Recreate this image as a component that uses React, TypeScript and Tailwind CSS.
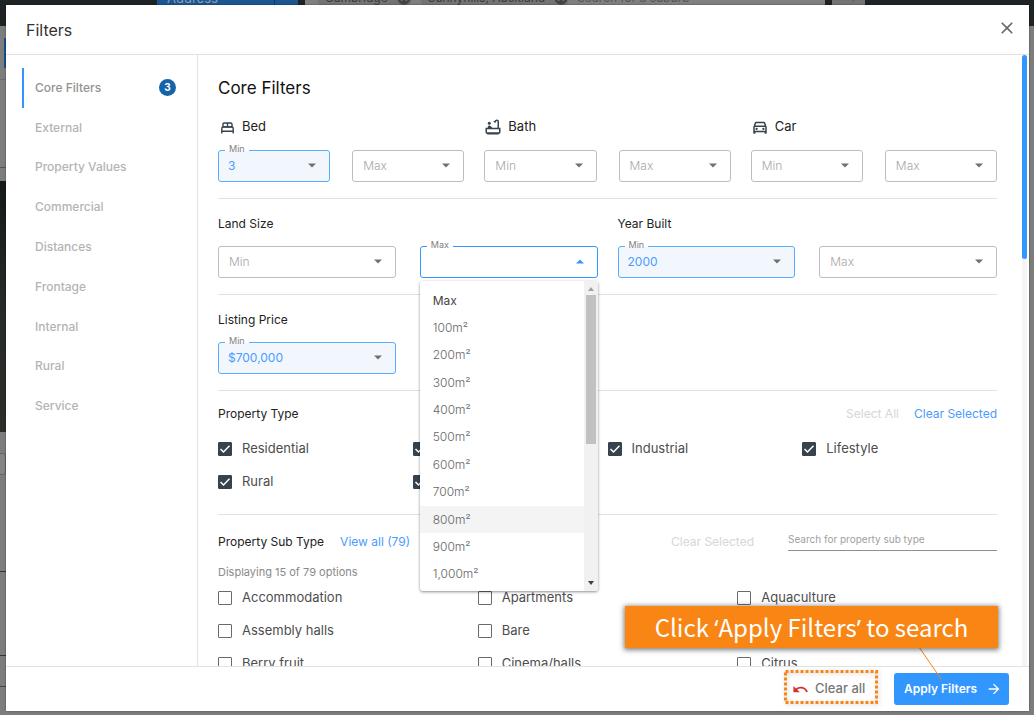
import { useState } from "react";
import type { ReactNode } from "react";
import {
  MdArrowForward,
  MdCancel,
  MdClose,
  MdOutlineBathtub,
  MdOutlineDirectionsCar,
  MdSearch,
  MdUndo,
} from "react-icons/md";

const sections = [
  "Core Filters",
  "External",
  "Property Values",
  "Commercial",
  "Distances",
  "Frontage",
  "Internal",
  "Rural",
  "Service",
];

const landSizes = [
  "100m²",
  "200m²",
  "300m²",
  "400m²",
  "500m²",
  "600m²",
  "700m²",
  "800m²",
  "900m²",
  "1,000m²",
];

const propertyTypes = ["Residential", "Commercial", "Industrial", "Lifestyle", "Rural", "Other"];

const subTypes = [
  "Accommodation",
  "Apartments",
  "Aquaculture",
  "Assembly halls",
  "Bare",
  "Car parks",
  "Berry fruit",
  "Cinema/halls",
  "Citrus",
];

function BedIcon() {
  return (
    <svg viewBox="0 0 13 12" className="mt-0.5 h-3 w-[13px] fill-none stroke-current stroke-[1.4]">
      <path d="M2 5.2V2.2Q2 1 3.2 1h6.6Q11 1 11 2.2v3M6.5 1v4.2M2 4.9h9" />
      <path d="M.8 11.6V6.4Q.8 5 2.2 5h8.6q1.4 0 1.4 1.4v5.2M.8 9.2h11.4" />
    </svg>
  );
}

function Caret({ up = false }: { up?: boolean }) {
  return (
    <svg
      viewBox="0 0 10 5"
      className={
        up
          ? "pointer-events-none absolute top-[13px] right-[13px] h-[5px] w-2.5 fill-[#3296ff]"
          : "pointer-events-none absolute top-[13px] right-[13px] h-[5px] w-2.5 fill-[#707070]"
      }
    >
      <path d={up ? "M1 4.5 5 .5l4 4z" : "M1 .5h8l-4 4z"} />
    </svg>
  );
}

function FloatingLabel({ text }: { text: string }) {
  return (
    <span className="pointer-events-none absolute -top-1.5 left-[7px] h-[7px] bg-white px-1 text-[9px] leading-[9px] text-[#808080]">
      {text}
    </span>
  );
}

function RangeSelect({ group, bound, value = "" }: { group: string; bound: string; value?: string }) {
  const [current, setCurrent] = useState(value);
  return (
    <div className="relative min-w-0 flex-1">
      <select
        aria-label={`${group} ${bound}`}
        value={current}
        onChange={(e) => setCurrent(e.target.value)}
        className={
          current
            ? "h-8 w-full appearance-none rounded-[3px] border border-[#5aabff] bg-[#f2f7fe] pr-6 pb-px pl-[9px] text-[12px] text-[#4a9bff]"
            : "h-8 w-full appearance-none rounded-[3px] border border-[#bdbdbd] bg-white pr-6 pl-2.5 text-[12px] font-light text-[#a8a8a8]"
        }
      >
        <option value="">{bound}</option>
        {value && <option value={value}>{value}</option>}
      </select>
      <Caret />
      {current && <FloatingLabel text={bound} />}
    </div>
  );
}

function LandSizeMax() {
  const [open, setOpen] = useState(true);
  const [value, setValue] = useState("");
  return (
    <div className="relative min-w-0 flex-1">
      <button
        type="button"
        aria-label="Land Size Max"
        aria-haspopup="listbox"
        aria-expanded={open}
        onClick={() => setOpen(!open)}
        className="block h-8 w-full rounded-[3px] border border-[#3296ff] bg-white pl-[9px] text-left text-[12px] text-[#4a9bff]"
      >
        {value}
      </button>
      <Caret up={open} />
      <FloatingLabel text="Max" />
      {open && (
        <div className="absolute top-[35px] left-0 z-10 flex h-[310px] w-full overflow-hidden rounded-[3px] bg-white shadow-[0_1px_3px_rgba(0,0,0,0.45)]">
          <ul role="listbox" aria-label="Land Size Max" className="flex flex-1 flex-col pt-1.5 pb-[3px]">
            {["Max", ...landSizes].map((size) => (
              <li
                key={size}
                role="option"
                aria-selected={size === value}
                onClick={() => {
                  setValue(size === "Max" ? "" : size);
                  setOpen(false);
                }}
                className={
                  size === "Max"
                    ? "flex flex-1 items-center px-[13px] text-[12px] text-[#444444]"
                    : size === "800m²"
                      ? "flex flex-1 items-center bg-[#f4f4f4] px-[13px] text-[12px] font-light text-[#666666]"
                      : "flex flex-1 items-center px-[13px] text-[12px] font-light text-[#666666]"
                }
              >
                {size}
              </li>
            ))}
          </ul>
          <div className="flex w-3.5 flex-col items-center justify-between bg-[#f1f1f1] py-1.5">
            <svg viewBox="0 0 6 4" className="h-1 w-1.5 fill-[#a0a0a0]">
              <path d="M0 4 3 0l3 4z" />
            </svg>
            <div className="mt-1 mb-auto h-[149px] w-2.5 bg-[#c1c1c1]" />
            <svg viewBox="0 0 6 4" className="h-1 w-1.5 fill-[#404040]">
              <path d="M0 0h6L3 4z" />
            </svg>
          </div>
        </div>
      )}
    </div>
  );
}

function Check({ label, checked = false }: { label: string; checked?: boolean }) {
  const [on, setOn] = useState(checked);
  return (
    <label className="flex h-[33px] items-center gap-2.5 text-[13px] text-[#4d4d4d]">
      <span className="relative size-3.5">
        <input
          type="checkbox"
          checked={on}
          onChange={() => setOn(!on)}
          className="block size-3.5 appearance-none rounded-[1px] border-[1.5px] border-[#6a6a6a] checked:border-[#36424d] checked:bg-[#36424d]"
        />
        {on && (
          <svg viewBox="0 0 14 14" className="pointer-events-none absolute inset-0 fill-none stroke-white stroke-[1.5]">
            <path d="m2.5 7 3 3 6-6.2" />
          </svg>
        )}
      </span>
      {label}
    </label>
  );
}

function RoomGroup({ icon, name, min }: { icon: ReactNode; name: string; min?: string }) {
  return (
    <div>
      <h3 className="flex h-5 items-center gap-1.5 text-[13px] text-[#222222]">
        <span className="flex w-[18px] justify-center text-[#36424d]">{icon}</span>
        {name}
      </h3>
      <div className="mt-[13px] flex gap-[22px]">
        <RangeSelect group={name} bound="Min" value={min} />
        <RangeSelect group={name} bound="Max" />
      </div>
    </div>
  );
}

function Backdrop() {
  return (
    <div aria-hidden="true" className="absolute inset-0 overflow-hidden bg-[#7d7d7d]">
      <div className="flex h-[26px] items-start bg-[#1e2326] pl-[157px] text-[13px] leading-5">
        <div className="flex h-[26px] w-[141px] gap-px bg-[#123a66]">
          <div className="w-[117px] bg-[#1b5592]">
            <span className="-mt-3 block pl-2.5 text-[#8b9fb5]">Address</span>
          </div>
          <div className="flex-1 bg-[#1b5592]" />
        </div>
        <div className="ml-[7px] flex h-[26px] w-[520px] gap-2 bg-[#808080] px-3 text-[12px] text-[#3c3c3c]">
          <span className="-mt-3 flex h-5 items-center gap-2 rounded-full bg-[#747474] pl-2">
            Cambridge
            <MdCancel className="size-4 text-[#444444]" />
          </span>
          <span className="-mt-3 flex h-5 items-center gap-2 rounded-full bg-[#747474] pl-2">
            Sunnyhills, Auckland
            <MdCancel className="size-4 text-[#444444]" />
          </span>
          <span className="-mt-3 text-[#555555]">Search for a suburb</span>
        </div>
        <div className="ml-[7px] flex h-[26px] w-[33px] justify-center bg-[#747474]">
          <MdSearch className="-mt-3 size-4 text-[#606060]" />
        </div>
      </div>
      <div className="flex w-1.5 flex-col">
        <div className="mt-3 ml-1 h-[30px] bg-[#174f8c]" />
        <div className="mt-[11px] h-px bg-[#6c6c6c]" />
        <div className="mt-[87px] h-px bg-[#555555]" />
        <div className="mt-[13px] h-[251px] bg-linear-to-b from-[#151a18] via-[#252b29] to-[#2e2c26]" />
        <div className="mt-[21px] h-[22px] rounded-r-[3px] border border-l-0 border-[#666666] bg-[#858585]" />
        <div className="mt-24 h-px bg-[#333333]" />
        <div className="mt-[83px] h-px bg-[#333333]" />
        <div className="mt-[30px] h-px bg-[#444444]" />
      </div>
    </div>
  );
}

export default function App() {
  return (
    <div className="relative h-screen overflow-hidden font-['Inter',sans-serif]">
      <Backdrop />
      <div className="relative h-full pt-[5px] pr-[5px] pb-1 pl-1.5">
        <div role="dialog" aria-label="Filters" className="relative flex h-full flex-col bg-white shadow-[0_0_2px_rgba(0,0,0,0.4)]">
          <header className="flex h-[50px] shrink-0 items-center justify-between border-b border-[#e2e2e2] pr-3 pl-5">
            <h1 className="text-[16px] text-[#333333]">Filters</h1>
            <button type="button" aria-label="Close" className="pb-1 text-[#6a6a6a]">
              <MdClose className="size-5" />
            </button>
          </header>

          <div className="flex min-h-0 flex-1">
            <nav aria-label="Filter sections" className="w-48 shrink-0 border-r border-[#e2e2e2] pt-[13px] pl-4">
              <ul className="grid h-[358px] auto-rows-fr text-[12px] font-medium">
                {sections.map((name, i) => (
                  <li key={name} className="grid">
                    <a
                      href="#core"
                      className={
                        i === 0
                          ? "flex items-center justify-between border-l-2 border-[#3296ff] pr-[21px] pl-[11px] text-[#929292]"
                          : "flex items-center pl-[13px] text-[#b4b4b4]"
                      }
                    >
                      {name}
                      {i === 0 && (
                        <span className="flex size-[17px] items-center justify-center rounded-full bg-[#1664a8] text-[10px] font-bold text-white">
                          3
                        </span>
                      )}
                    </a>
                  </li>
                ))}
              </ul>
            </nav>

            <main id="core" className="min-w-0 flex-1 overflow-hidden pr-[25px] pl-5">
              <h2 className="pt-5 text-[17px] leading-[26px] text-[#111111]">Core Filters</h2>

              <section className="mt-4 grid grid-cols-3 gap-5 border-b border-[#e2e2e2] pb-4">
                <RoomGroup icon={<BedIcon />} name="Bed" min="3" />
                <RoomGroup icon={<MdOutlineBathtub className="size-[18px] shrink-0" />} name="Bath" />
                <RoomGroup icon={<MdOutlineDirectionsCar className="size-[18px] shrink-0" />} name="Car" />
              </section>

              <section className="grid grid-cols-2 gap-5 border-b border-[#e2e2e2] pt-[15px] pb-4">
                <div>
                  <h3 className="text-[12px] leading-5 text-[#222222]">Land Size</h3>
                  <div className="mt-3 flex gap-6">
                    <RangeSelect group="Land Size" bound="Min" />
                    <LandSizeMax />
                  </div>
                </div>
                <div>
                  <h3 className="text-[12px] leading-5 text-[#222222]">Year Built</h3>
                  <div className="mt-3 flex gap-6">
                    <RangeSelect group="Year Built" bound="Min" value="2000" />
                    <RangeSelect group="Year Built" bound="Max" />
                  </div>
                </div>
              </section>

              <section className="grid grid-cols-2 gap-5 border-b border-[#e2e2e2] pt-[15px] pb-4">
                <div>
                  <h3 className="text-[12px] leading-5 text-[#222222]">Listing Price</h3>
                  <div className="mt-3 flex gap-6">
                    <RangeSelect group="Listing Price" bound="Min" value="$700,000" />
                    <RangeSelect group="Listing Price" bound="Max" />
                  </div>
                </div>
              </section>

              <section className="border-b border-[#e2e2e2] pt-[13px] pb-4">
                <div className="flex h-5 items-center gap-[15px] text-[12px]">
                  <h3 className="mr-auto text-[#222222]">Property Type</h3>
                  <button type="button" className="text-[#d6d6d6]">
                    Select All
                  </button>
                  <button type="button" className="text-[#4a9bff]">
                    Clear Selected
                  </button>
                </div>
                <div className="mt-2 grid grid-cols-4">
                  {propertyTypes.map((type) => (
                    <Check key={type} label={type} checked />
                  ))}
                </div>
              </section>

              <section className="pt-3">
                <div className="flex h-[30px] items-center text-[12px]">
                  <h3 className="text-[#222222]">Property Sub Type</h3>
                  <button type="button" className="mr-auto ml-4 text-[#4a9bff]">
                    View all (79)
                  </button>
                  <button type="button" className="mr-[34px] text-[#d6d6d6]">
                    Clear Selected
                  </button>
                  <input
                    type="search"
                    aria-label="Search for property sub type"
                    placeholder="Search for property sub type"
                    className="mb-1.5 h-6 w-[209px] border-b border-[#8f8f8f] text-[10px] outline-none placeholder:text-[#a0a0a0]"
                  />
                </div>
                <p className="mt-1.5 text-[11px] leading-[18px] text-[#8a8a8a]">Displaying 15 of 79 options</p>
                <div className="grid grid-cols-3">
                  {subTypes.map((type) => (
                    <Check key={type} label={type} />
                  ))}
                </div>
              </section>
            </main>

            <div className="mr-0.5 w-[5px] shrink-0 bg-[#f5f5f5]">
              <div className="h-1/3 rounded-full bg-[#3296ff]" />
            </div>
          </div>

          <footer className="flex h-[45px] shrink-0 items-center justify-end gap-4 border-t border-[#e2e2e2] pr-5">
            <button
              type="button"
              className="relative flex h-[34px] w-[94px] items-center gap-1.5 pl-2 text-[13px] font-medium text-[#777777]"
            >
              <svg className="absolute inset-x-0 -top-0.5 h-full w-full fill-none stroke-[#f98515] stroke-3 drop-shadow-[1px_1px_2px_rgba(0,0,0,0.2)]">
                <rect x="1.5" y="1.5" width="91" height="31" strokeDasharray="3 2" />
              </svg>
              <MdUndo className="size-[17px] shrink-0 text-[#d32f2f]" />
              <span className="whitespace-nowrap">Clear all</span>
            </button>
            <button
              type="button"
              className="flex h-8 w-[115px] items-center justify-between rounded-[3px] bg-[#3296ff] pr-[7px] pl-2.5 text-[12px] font-semibold whitespace-nowrap text-white"
            >
              Apply Filters
              <MdArrowForward className="size-4 shrink-0" />
            </button>
          </footer>

          <svg
            viewBox="0 0 24 34"
            className="pointer-events-none absolute right-[87px] bottom-[30px] h-[34px] w-6 fill-none stroke-[#f98515]"
          >
            <path d="M1 0 23 32" />
          </svg>
          <div className="absolute right-[31px] bottom-[63px] z-20 flex h-[42px] w-[373px] items-center justify-center bg-[#f98515] text-[24px] leading-10 whitespace-nowrap text-white shadow-[0_1px_5px_1px_rgba(0,0,0,0.5)]">
            <p className="font-['Noto_Sans_CJK_SC',sans-serif]">
              Click <span className="font-['Noto_Sans',sans-serif]">‘</span>Apply Filters
              <span className="font-['Noto_Sans',sans-serif]">’</span> to search
            </p>
          </div>
        </div>
      </div>
    </div>
  );
}
